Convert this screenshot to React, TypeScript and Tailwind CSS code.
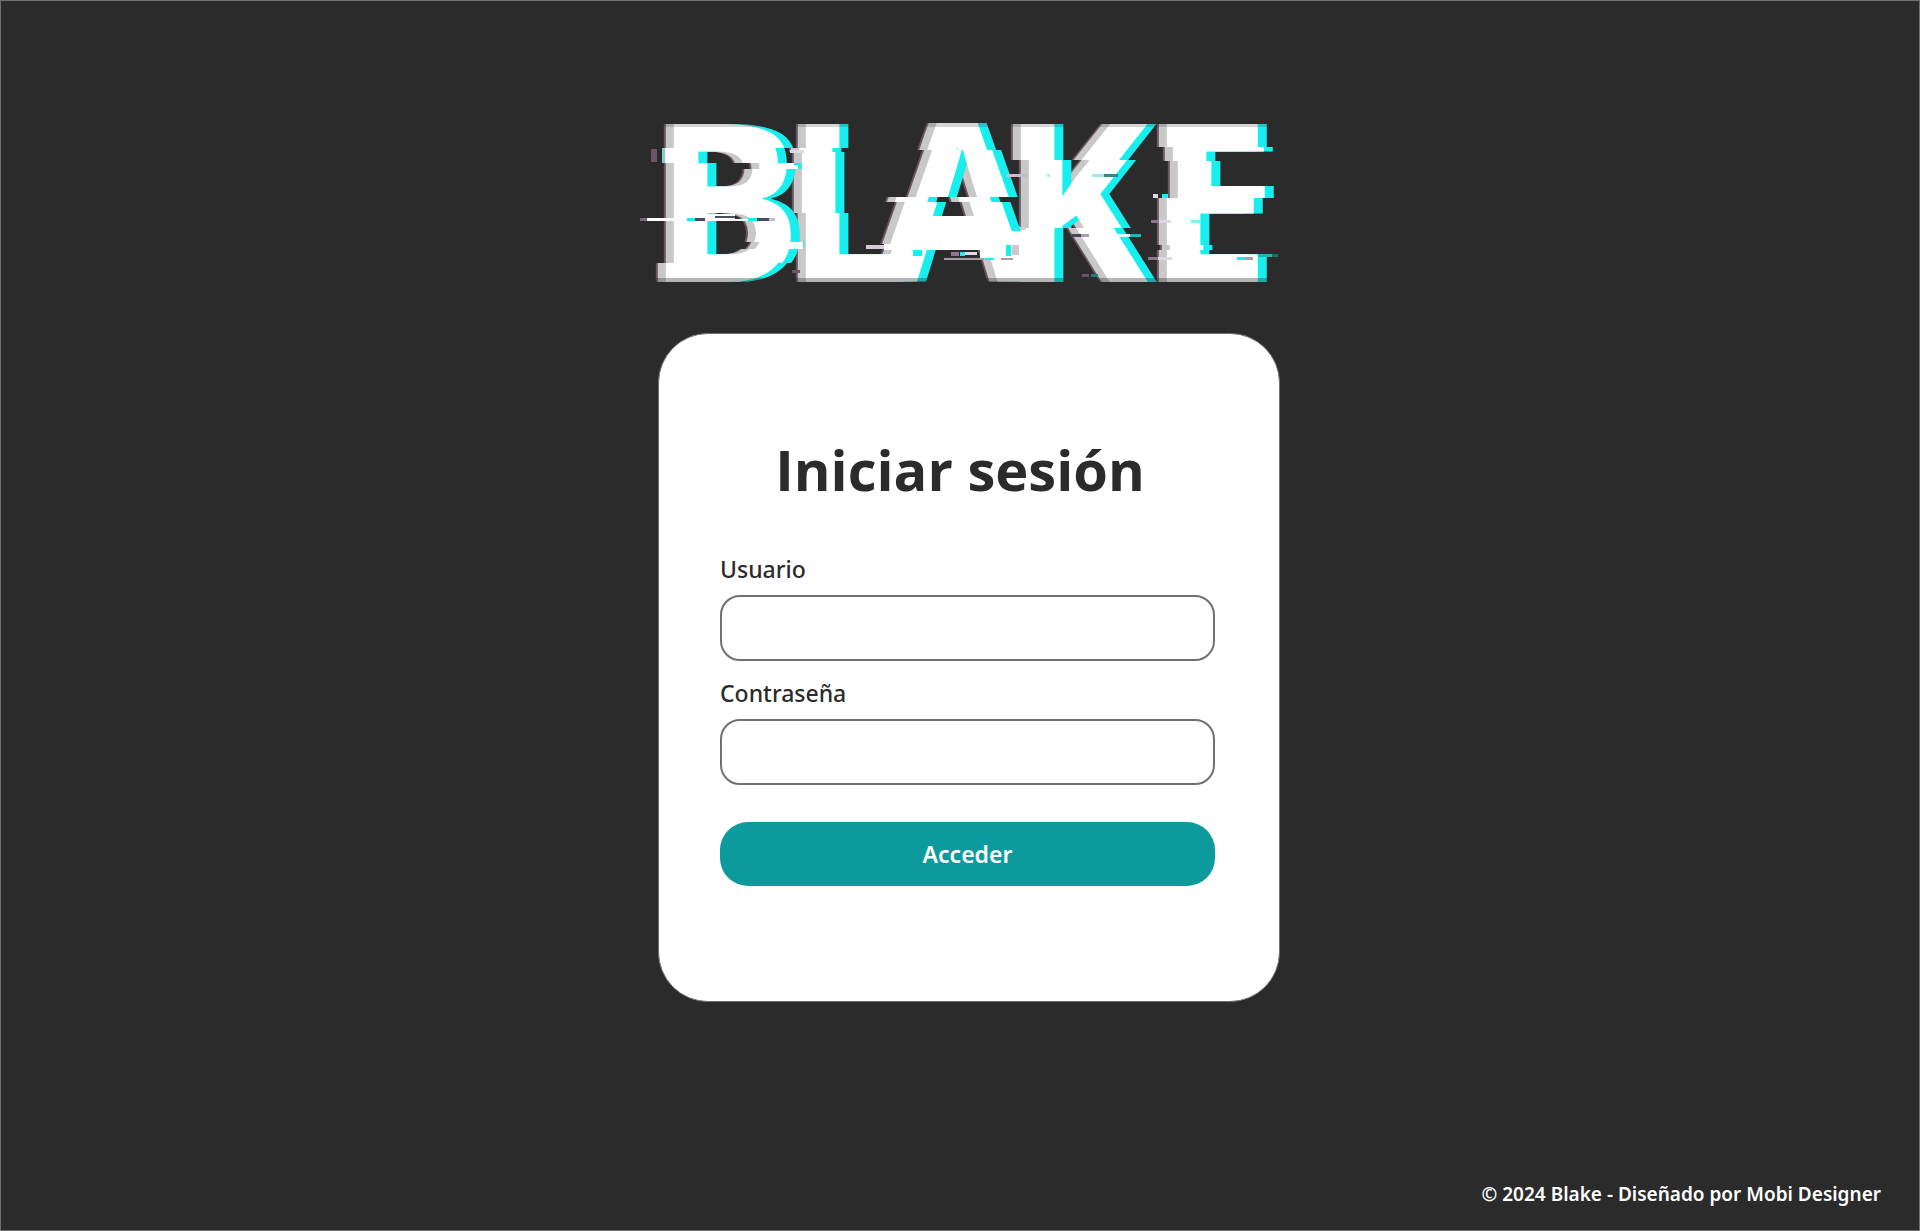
import React from "react";

type Band = [x: number, y: number, width: number, height: number, shift: number];

/* Parts of the wordmark, each pushed sideways by its shift */
const bands: Band[] = [
  // B
  [640, 120, 157, 28, 0],
  [640, 148, 157, 15, -9],
  [640, 163, 100, 6, 0],
  [740, 163, 57, 6, 7],
  [640, 169, 157, 73, 0],
  [640, 242, 100, 7, 0],
  [740, 242, 57, 7, 5],
  [640, 249, 157, 14, 0],
  [640, 263, 104, 21, -8],
  [740, 263, 57, 21, -4],
  // L
  [797, 120, 65, 28, 0],
  [797, 148, 65, 4, -7],
  [797, 152, 65, 61, -4],
  [797, 213, 65, 71, 0],
  // A
  [862, 120, 156, 30, 0],
  [862, 150, 156, 47, 5],
  [862, 197, 156, 5, -14],
  [862, 202, 156, 42, -4],
  [862, 244, 156, 40, 0],
  // K
  [1018, 120, 140, 40, 0],
  [1018, 160, 140, 68, 8],
  [1018, 228, 140, 56, 0],
  // E
  [1158, 120, 126, 27, 0],
  [1158, 147, 126, 14, 6],
  [1158, 161, 126, 37, 11],
  [1158, 198, 126, 47, 0],
  [1158, 245, 126, 5, 3],
  [1158, 250, 126, 34, 0],
];

/* Stray scan-line fragments: x, y, width, height, colour */
const fragments: [number, number, number, number, string][] = [
  [651, 148, 11, 15, "#2b2b2b"],
  [651, 149, 6, 13, "#6b5566"],
  [662, 148, 3, 15, "#7fd0cc"],
  [640, 218, 7, 3, "#7d6476"],
  [647, 218, 40, 3, "#ffffff"],
  [687, 218, 8, 3, "#17eeee"],
  [695, 218, 10, 3, "#454a60"],
  [705, 214, 30, 5, "#ffffff"],
  [705, 219, 43, 2, "#ffffff"],
  [715, 216, 20, 2, "#4b5060"],
  [748, 218, 9, 3, "#17eeee"],
  [757, 218, 12, 3, "#454a60"],
  [769, 218, 6, 3, "#c0c0c8"],
  [789, 165, 9, 4, "#ffffff"],
  [790, 150, 14, 3, "#dcdcdc"],
  [792, 270, 8, 3, "#6b5566"],
  [795, 242, 8, 7, "#ffffff"],
  [866, 245, 20, 4, "#d8ccd6"],
  [884, 244, 110, 6, "#ffffff"],
  [913, 250, 9, 6, "#17eeee"],
  [1006, 174, 22, 3, "#c8bcc6"],
  [1047, 174, 3, 3, "#9ff4f4"],
  [1000, 231, 24, 15, "#ffffff"],
  [980, 246, 44, 12, "#ffffff"],
  [1011, 226, 9, 4, "#17eeee"],
  [1020, 227, 6, 3, "#d0d0d0"],
  [1006, 245, 5, 11, "#17eeee"],
  [1012, 245, 7, 10, "#d0c8ce"],
  [944, 258, 40, 2, "#a99ca8"],
  [951, 252, 8, 4, "#8d7788"],
  [960, 252, 5, 4, "#17eeee"],
  [965, 252, 12, 3, "#e4d6e2"],
  [985, 258, 9, 2, "#17eeee"],
  [1001, 258, 12, 2, "#a99ca8"],
  [1092, 174, 12, 3, "#9fe8e8"],
  [1104, 174, 14, 3, "#2f8a8a"],
  [1072, 234, 9, 3, "#4a455c"],
  [1081, 234, 8, 3, "#a99ca8"],
  [1115, 234, 15, 3, "#e8f8f8"],
  [1130, 234, 11, 3, "#23b5b5"],
  [1082, 274, 7, 3, "#6b5566"],
  [1091, 274, 7, 3, "#197f7f"],
  [1153, 194, 5, 4, "#e4d6e2"],
  [1162, 194, 6, 4, "#17eeee"],
  [1151, 220, 8, 3, "#8d7788"],
  [1159, 220, 12, 3, "#e4d6e2"],
  [1191, 220, 9, 3, "#7df2f2"],
  [1148, 257, 10, 3, "#8d7788"],
  [1158, 257, 14, 3, "#e4d6e2"],
  [1237, 257, 8, 3, "#17eeee"],
  [1245, 257, 8, 3, "#a99ca8"],
  [1258, 254, 14, 3, "#23b5b5"],
  [1272, 254, 6, 3, "#276a6a"],
];

function GlitchLogo() {
  return (
    <svg
      viewBox="636 40 648 293"
      className="block h-auto w-full max-w-[648px] overflow-visible"
    >
      <defs>
        <filter
          id="glitch"
          filterUnits="userSpaceOnUse"
          primitiveUnits="userSpaceOnUse"
          colorInterpolationFilters="sRGB"
          x="636"
          y="116"
          width="648"
          height="172"
        >
          {bands.map(([x, y, width, height, shift], i) => (
            <feOffset
              key={i}
              in="SourceGraphic"
              dx={shift}
              dy="0"
              x={x + shift}
              y={y}
              width={width}
              height={height}
              result={`band${i}`}
            />
          ))}
          <feMerge result="sliced">
            {bands.map((_, i) => (
              <feMergeNode key={i} in={`band${i}`} />
            ))}
          </feMerge>
          <feFlood floodColor="#6b5566" result="plum" />
          <feOffset in="sliced" dx="-10" result="o1" />
          <feComposite in="plum" in2="o1" operator="in" result="l1" />
          <feFlood floodColor="#c8c8c8" result="grey" />
          <feOffset in="sliced" dx="-8" result="o2" />
          <feComposite in="grey" in2="o2" operator="in" result="l2" />
          <feFlood floodColor="#17eeee" result="cyan" />
          <feOffset in="sliced" dx="9" result="o3" />
          <feComposite in="cyan" in2="o3" operator="in" result="l3" />
          <feMerge>
            <feMergeNode in="l1" />
            <feMergeNode in="l2" />
            <feMergeNode in="l3" />
            <feMergeNode in="sliced" />
          </feMerge>
        </filter>
        <filter
          id="soften"
          colorInterpolationFilters="sRGB"
          x="-2%"
          y="-2%"
          width="104%"
          height="104%"
        >
          <feGaussianBlur stdDeviation="0.7" />
        </filter>
      </defs>
      <g filter="url(#soften)">
        <g filter="url(#glitch)">
          <text
            x="654 786 881 1001 1147"
            y="282"
            fill="#ffffff"
            fontFamily='"Open Sans", sans-serif'
            fontWeight="700"
            fontSize="221"
          >
            BLAKE
          </text>
        </g>
        {fragments.map(([x, y, w, h, fill], i) => (
          <rect key={i} x={x} y={y} width={w} height={h} fill={fill} />
        ))}
        <rect x="640" y="122" width="640" height="5" fill="#2b2b2b" opacity="0.2" />
        <rect x="640" y="278" width="640" height="5" fill="#2b2b2b" opacity="0.35" />
      </g>
    </svg>
  );
}

function Field({ id, label, type }: { id: string; label: string; type: string }) {
  return (
    <div className="flex flex-col gap-2">
      <label htmlFor={id} className="text-[23px] leading-9 font-medium">
        {label}
      </label>
      <input
        id={id}
        name={id}
        type={type}
        className="h-[66px] w-full rounded-[20px] border-2 border-[#707070] bg-white px-5 text-2xl outline-none focus:border-[#0d9a9d]"
      />
    </div>
  );
}

export default function App() {
  return (
    <div className="flex min-h-screen flex-col border border-[#707070] bg-[#2b2b2b] font-['Noto_Sans','Open_Sans',sans-serif] text-[#2b2b2b]">
      <main className="flex flex-1 flex-col items-center px-4 pt-[39px]">
        <GlitchLogo />
        <section className="w-full max-w-[640px] pl-[18px]">
          <form
            className="rounded-[50px] border border-[#707070] bg-white pt-[99px] pr-[64px] pb-[115px] pl-[61px]"
            onSubmit={(e) => e.preventDefault()}
          >
            <h1 className="pr-[15px] text-center font-['Open_Sans','Noto_Sans',sans-serif] text-[56px] leading-[72px] font-bold">
              Iniciar sesión
            </h1>
            <div className="mt-[46px] flex flex-col gap-[14px]">
              <Field id="usuario" label="Usuario" type="text" />
              <Field id="contrasena" label="Contraseña" type="password" />
            </div>
            <button
              type="submit"
              className="mt-[37px] h-16 w-full rounded-[28px] bg-[#0d9a9d] text-[23px] font-semibold text-white"
            >
              Acceder
            </button>
          </form>
        </section>
      </main>
      <footer className="px-[38px] pb-[21px] text-right text-[19px] leading-[30px] font-semibold text-white">
        © 2024 Blake - Diseñado por Mobi Designer
      </footer>
    </div>
  );
}
